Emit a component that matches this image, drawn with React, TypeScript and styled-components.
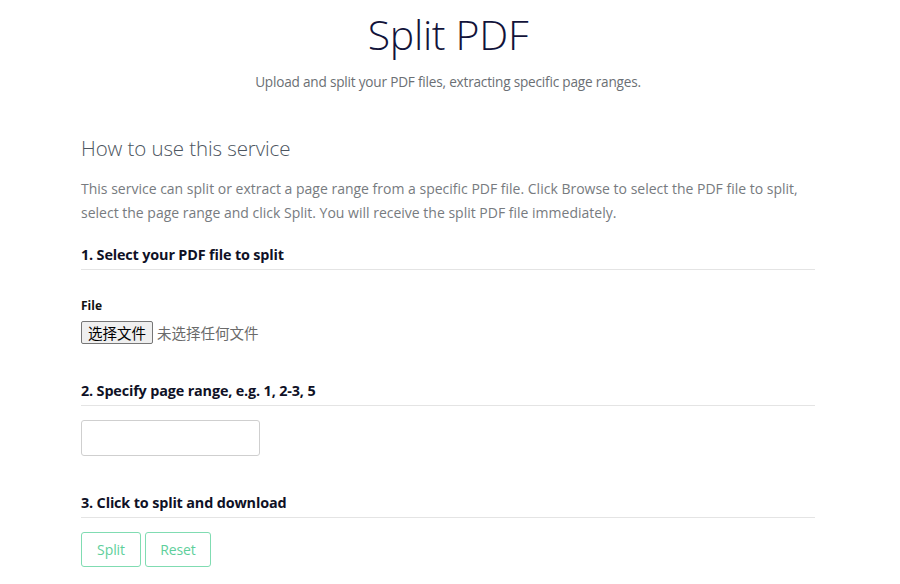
import React from "react";
import styled, { createGlobalStyle } from "styled-components";

const Global = createGlobalStyle`
  html, body { margin: 0; padding: 0; background: #fff; }
  body { font-family: "Open Sans", "Noto Sans", "Noto Sans CJK SC", sans-serif; color: #333; }
`;

const Page = styled.div`
  width: 734px;
  margin: 0 auto;
  padding: 0 4px 0 0;
`;

const Header = styled.header`
  display: flex;
  flex-direction: column;
  align-items: center;
  padding-top: 6px;
`;

const Title = styled.h1`
  margin: 0;
  font-size: 41px;
  font-weight: 300;
  line-height: 56px;
  color: #12133a;
  letter-spacing: -0.3px;
`;

const Subtitle = styled.p`
  margin: 10px 0 0;
  font-size: 13.6px;
  line-height: 20px;
  color: #6b6f74;
  letter-spacing: -0.2px;
`;

const SectionTitle = styled.h2`
  margin: 41px 0 0;
  font-size: 20.5px;
  font-weight: 300;
  line-height: 30px;
  color: #4c5560;
  letter-spacing: -0.1px;
`;

const Intro = styled.p`
  margin: 14px 0 0;
  font-size: 14px;
  line-height: 24px;
  color: #777b80;
  letter-spacing: 0;
`;

const StepHeading = styled.h3<{ $top: number }>`
  margin: ${(p) => p.$top}px 0 0;
  padding-bottom: 4px;
  font-size: 14.4px;
  font-weight: 700;
  line-height: 20px;
  color: #0f1126;
  border-bottom: 1px solid #e4e4e4;
  letter-spacing: -0.15px;
`;

const FieldLabel = styled.label`
  display: block;
  margin-top: 28px;
  font-size: 12px;
  font-weight: 700;
  line-height: 16px;
  color: #111;
`;

const FileRow = styled.div`
  display: flex;
  align-items: center;
  gap: 4px;
  margin-top: 7px;
`;

const FileButton = styled.button`
  height: 23px;
  padding: 0 6px;
  font-family: "Noto Sans CJK SC", sans-serif;
  font-size: 14.5px;
  color: #000;
  background: #efefef;
  border: 1px solid #767676;
  border-radius: 2px;
`;

const FileStatus = styled.span`
  font-family: "Noto Sans CJK SC", sans-serif;
  font-size: 14.5px;
  color: #6a6a6a;
`;

const RangeInput = styled.input`
  display: block;
  margin-top: 14px;
  width: 179px;
  height: 36px;
  box-sizing: border-box;
  border: 1px solid #cfcfcf;
  border-radius: 3px;
  padding: 6px 10px;
  font-size: 14px;
  outline: none;
`;

const ButtonRow = styled.div`
  display: flex;
  gap: 4px;
  margin-top: 14px;
`;

const ActionButton = styled.button<{ $w: number }>`
  width: ${(p) => p.$w}px;
  height: 35px;
  box-sizing: border-box;
  background: #fff;
  border: 1px solid #80dcb2;
  border-radius: 3px;
  color: #5ecf9b;
  font-family: "Open Sans", sans-serif;
  font-size: 14px;
  letter-spacing: -0.1px;
`;

export default function App() {
  return (
    <>
      <Global />
      <Page>
        <Header>
          <Title>Split PDF</Title>
          <Subtitle>Upload and split your PDF files, extracting specific page ranges.</Subtitle>
        </Header>
        <SectionTitle>How to use this service</SectionTitle>
        <Intro>
          This service can split or extract a page range from a specific PDF file. Click Browse to select the PDF file to split,
          select the page range and click Split. You will receive the split PDF file immediately.
        </Intro>
        <StepHeading $top={20}>1. Select your PDF file to split</StepHeading>
        <FieldLabel>File</FieldLabel>
        <FileRow>
          <FileButton type="button">选择文件</FileButton>
          <FileStatus>未选择任何文件</FileStatus>
        </FileRow>
        <StepHeading $top={37}>2. Specify page range, e.g. 1, 2-3, 5</StepHeading>
        <RangeInput type="text" />
        <StepHeading $top={37}>3. Click to split and download</StepHeading>
        <ButtonRow>
          <ActionButton $w={60}>Split</ActionButton>
          <ActionButton $w={66}>Reset</ActionButton>
        </ButtonRow>
      </Page>
    </>
  );
}
